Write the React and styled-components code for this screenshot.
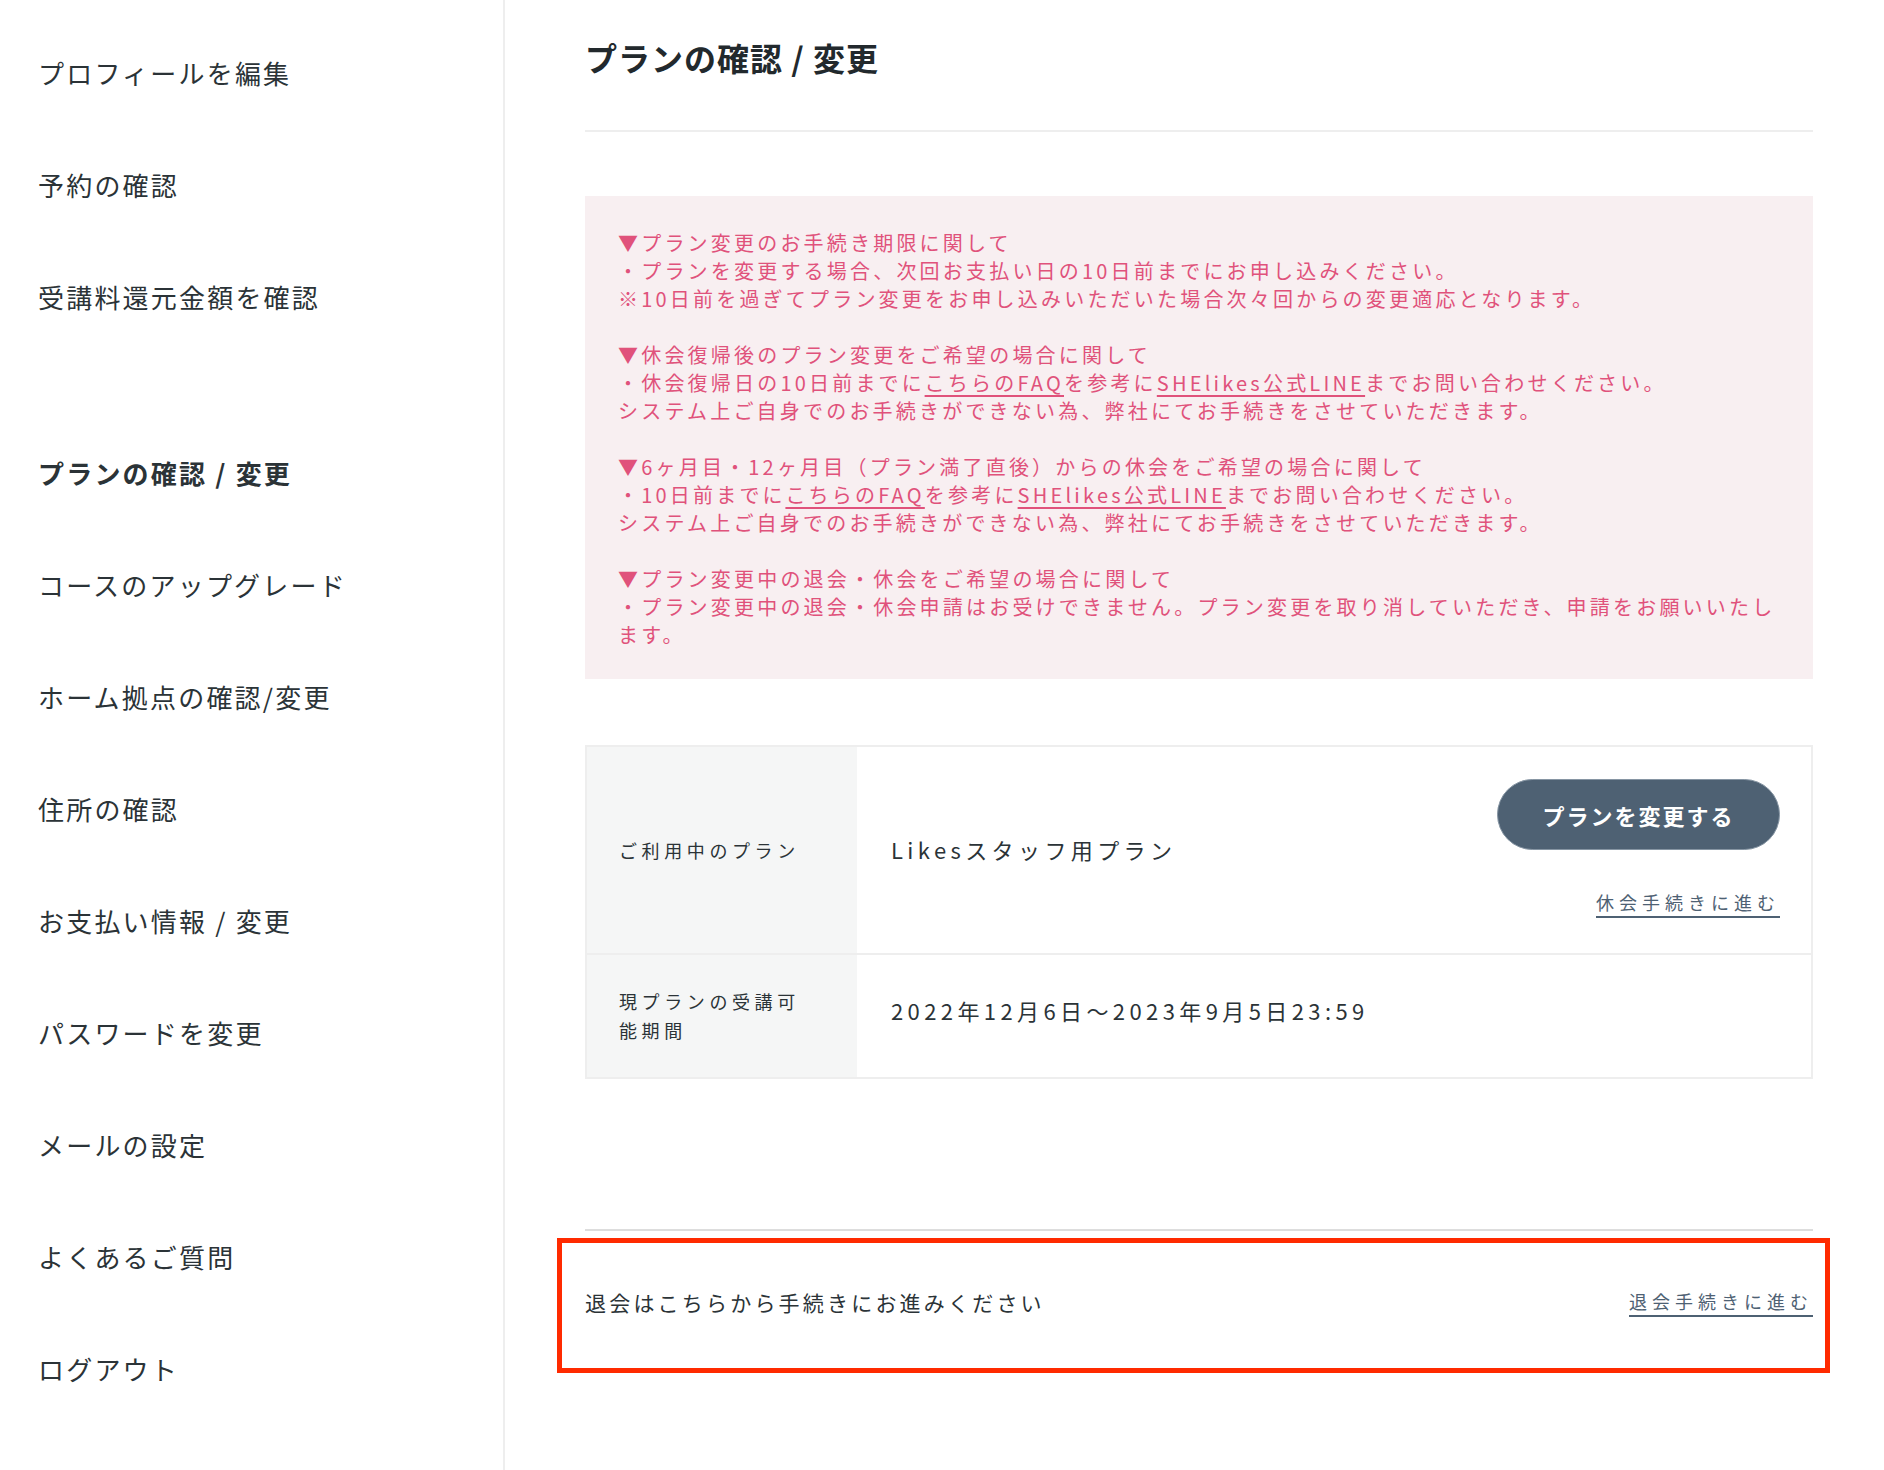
import React from "react";
import styled, { createGlobalStyle } from "styled-components";

const GlobalStyle = createGlobalStyle`
  * { box-sizing: border-box; }
  body {
    margin: 0;
    background: #fff;
    color: #2b3337;
    font-family: "Noto Sans CJK JP", "Noto Sans", sans-serif;
  }
`;

const navItems = [
  { label: "プロフィールを編集" },
  { label: "予約の確認" },
  { label: "受講料還元金額を確認" },
  { label: "プランの確認 / 変更", active: true, gap: true },
  { label: "コースのアップグレード" },
  { label: "ホーム拠点の確認/変更" },
  { label: "住所の確認" },
  { label: "お支払い情報 / 変更" },
  { label: "パスワードを変更" },
  { label: "メールの設定" },
  { label: "よくあるご質問" },
  { label: "ログアウト" },
];

const App = () => {
  return (
    <Layout>
      <GlobalStyle />
      <Sidebar>
        {navItems.map((item) => (
          <NavItem key={item.label} $active={item.active} $gap={item.gap}>
            {item.label}
          </NavItem>
        ))}
      </Sidebar>
      <Main>
        <Title>プランの確認 / 変更</Title>
        <Notice>
          ▼プラン変更のお手続き期限に関して
          <br />
          ・プランを変更する場合、次回お支払い日の10日前までにお申し込みください。
          <br />
          ※10日前を過ぎてプラン変更をお申し込みいただいた場合次々回からの変更適応となります。
          <br />
          <br />
          ▼休会復帰後のプラン変更をご希望の場合に関して
          <br />
          ・休会復帰日の10日前までに<NoticeLink href="#">こちらのFAQ</NoticeLink>を参考に
          <NoticeLink href="#">SHElikes公式LINE</NoticeLink>までお問い合わせください。
          <br />
          システム上ご自身でのお手続きができない為、弊社にてお手続きをさせていただきます。
          <br />
          <br />
          ▼6ヶ月目・12ヶ月目（プラン満了直後）からの休会をご希望の場合に関して
          <br />
          ・10日前までに<NoticeLink href="#">こちらのFAQ</NoticeLink>を参考に
          <NoticeLink href="#">SHElikes公式LINE</NoticeLink>までお問い合わせください。
          <br />
          システム上ご自身でのお手続きができない為、弊社にてお手続きをさせていただきます。
          <br />
          <br />
          ▼プラン変更中の退会・休会をご希望の場合に関して
          <br />
          ・プラン変更中の退会・休会申請はお受けできません。プラン変更を取り消していただき、申請をお願いいたします。
        </Notice>

        <PlanTable>
          <Row>
            <Label>ご利用中のプラン</Label>
            <Value>
              <span>Likesスタッフ用プラン</span>
              <Actions>
                <ChangeButton>プランを変更する</ChangeButton>
                <TextLink href="#">休会手続きに進む</TextLink>
              </Actions>
            </Value>
          </Row>
          <Row $last>
            <Label>現プランの受講可能期間</Label>
            <Value $top>
              <span>2022年12月6日〜2023年9月5日23:59</span>
            </Value>
          </Row>
        </PlanTable>

        <Withdraw>
          <WithdrawText>退会はこちらから手続きにお進みください</WithdrawText>
          <TextLink href="#">退会手続きに進む</TextLink>
        </Withdraw>
      </Main>
    </Layout>
  );
};

const Layout = styled.div`
  display: flex;
  min-height: 1470px;
`;

const Sidebar = styled.nav`
  width: 505px;
  flex-shrink: 0;
  border-right: 2px solid #eeeeee;
  padding: 17px 0 0 38px;
  display: flex;
  flex-direction: column;
`;

const NavItem = styled.a`
  display: block;
  padding: 36px 0;
  margin-top: ${(p) => (p.$gap ? "64px" : "0")};
  font-size: 26px;
  line-height: 40px;
  letter-spacing: 2.2px;
  font-weight: ${(p) => (p.$active ? 700 : 400)};
  color: #2b3337;
  cursor: pointer;
`;

const Main = styled.main`
  flex: 1;
  padding: 33px 71px 0 80px;
`;

const Title = styled.h1`
  margin: 0;
  font-size: 32px;
  line-height: 48px;
  font-weight: 700;
  letter-spacing: 1px;
  color: #22292d;
  padding-bottom: 49px;
  border-bottom: 2px solid #eeeeee;
`;

const Notice = styled.div`
  margin-top: 64px;
  background: #f8eff1;
  padding: 33px 24px 30px 33px;
  color: #e0527b;
  font-size: 20px;
  line-height: 28px;
  letter-spacing: 3.2px;
`;

const NoticeLink = styled.a`
  color: #e0527b;
  text-decoration: underline;
  text-decoration-thickness: 2px;
  text-underline-offset: 4px;
`;

const PlanTable = styled.div`
  margin-top: 66px;
  border: 2px solid #eeeeee;
`;

const Row = styled.div`
  display: grid;
  grid-template-columns: 270px 1fr;
  border-bottom: ${(p) => (p.$last ? "none" : "2px solid #eeeeee")};
`;

const Label = styled.div`
  background: #f5f6f6;
  padding: 32px 40px 32px 32px;
  display: flex;
  align-items: center;
  font-size: 18px;
  line-height: 29px;
  letter-spacing: 4.6px;
  color: #2b3337;
`;

const Value = styled.div`
  padding: ${(p) => (p.$top ? "40px 31px 32px 34px" : "32px 31px 35px 34px")};
  display: flex;
  align-items: ${(p) => (p.$top ? "flex-start" : "center")};
  justify-content: space-between;
  font-size: 22px;
  line-height: 30px;
  letter-spacing: 4.4px;
  color: #2b3337;
`;

const Actions = styled.div`
  display: flex;
  flex-direction: column;
  align-items: flex-end;
  gap: 38px;
`;

const ChangeButton = styled.button`
  width: 283px;
  height: 71px;
  border-radius: 36px;
  border: 1px solid #8695a3;
  background: #4e6173;
  color: #fff;
  font-family: inherit;
  font-size: 22px;
  font-weight: 700;
  letter-spacing: 2px;
  cursor: pointer;
`;

const TextLink = styled.a`
  color: #4e6173;
  font-size: 18px;
  line-height: 28px;
  letter-spacing: 5px;
  text-decoration: none;
  border-bottom: 2px solid #4e6173;
  white-space: nowrap;
`;

const Withdraw = styled.div`
  position: relative;
  margin-top: 150px;
  border-top: 2px solid #dddddd;
  padding: 56px 0 56px;
  display: flex;
  align-items: center;
  justify-content: space-between;

  &::after {
    content: "";
    position: absolute;
    top: 7px;
    bottom: 0;
    left: -28px;
    right: -17px;
    border: 5px solid #ff2a00;
    pointer-events: none;
  }
`;

const WithdrawText = styled.p`
  margin: 0;
  font-size: 21px;
  line-height: 30px;
  letter-spacing: 3.2px;
  color: #2b3337;
`;

export default App;
